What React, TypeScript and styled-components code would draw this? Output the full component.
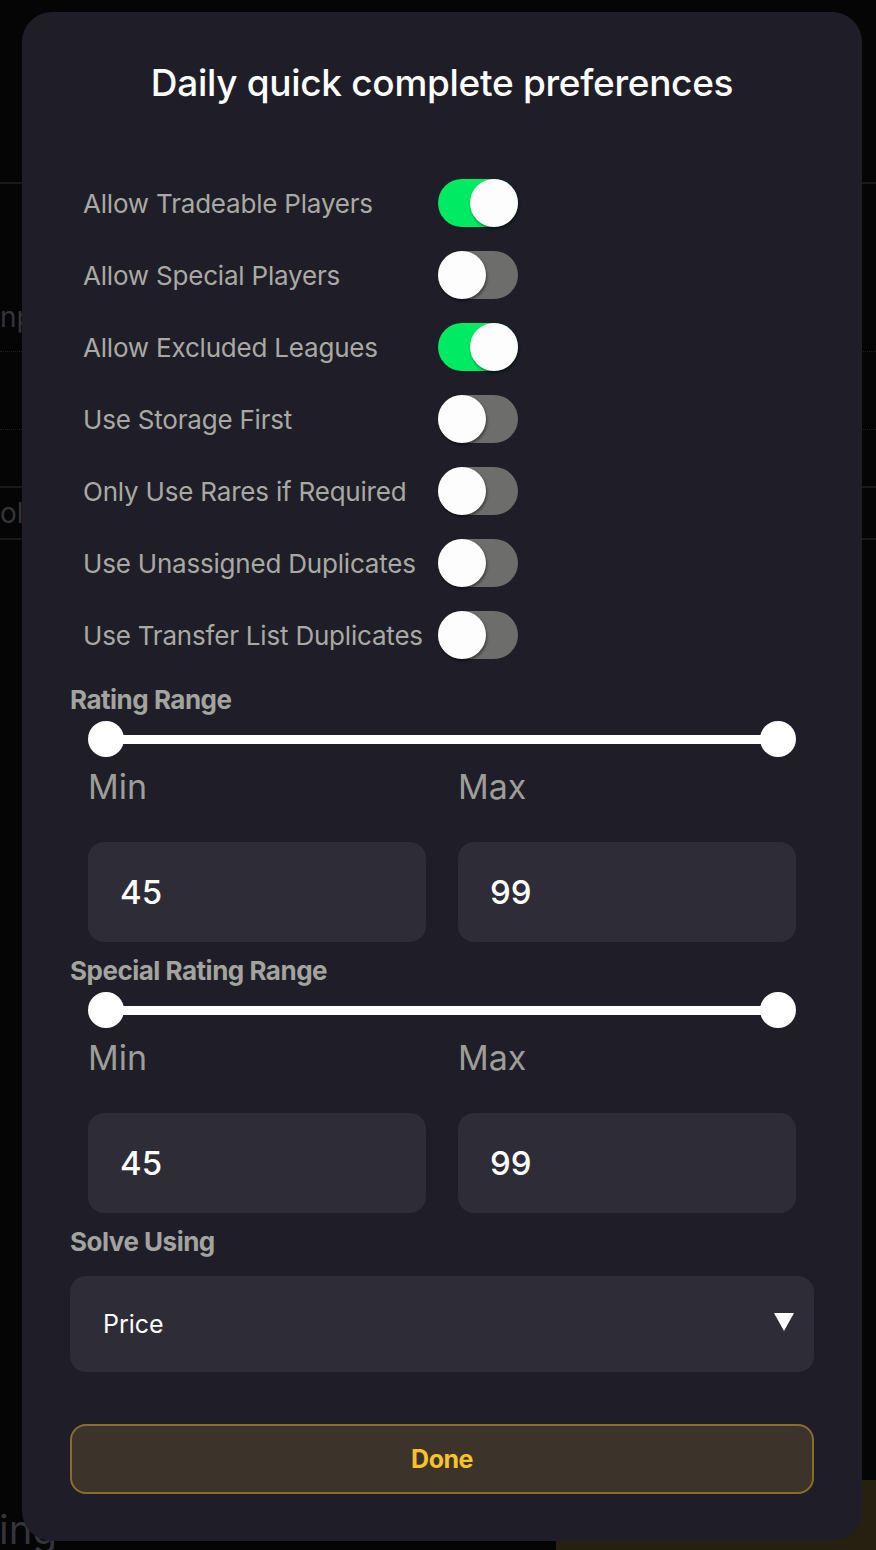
import React, { FC, useState } from 'react';
import styled, { createGlobalStyle } from 'styled-components';

const GlobalStyle = createGlobalStyle`
  html, body {
    margin: 0;
    padding: 0;
    background: #050505;
  }
  body {
    font-family: Inter, "Noto Sans", sans-serif;
    -webkit-font-smoothing: antialiased;
  }
`;

const Page = styled.div`
  position: relative;
  width: 876px;
  height: 1550px;
  overflow: hidden;
  background: #050505;
`;

/* faint page behind the dialog */
const Behind = styled.div`
  display: flex;
  flex-direction: column;
  height: 100%;
  opacity: 0.9;
`;
const BehindRow = styled.div<{ h: number; line?: string }>`
  height: ${(p) => p.h}px;
  box-sizing: border-box;
  border-bottom: ${(p) => p.line || 'none'};
  display: flex;
  align-items: center;
  color: #3a3a40;
  font-size: 28px;
  overflow: hidden;
  white-space: nowrap;
`;
const BehindFill = styled.div`
  flex: 1;
`;
const BehindBottom = styled.div`
  height: 70px;
  display: flex;
  align-items: flex-end;
  justify-content: space-between;
`;
const BehindWord = styled.span`
  color: #3a3a42;
  font-size: 40px;
  margin-left: -14px;
  line-height: 1;
`;
const BehindGold = styled.div`
  width: 320px;
  height: 70px;
  background: #2a2412;
  border-top-left-radius: 6px;
`;

const Modal = styled.div`
  position: absolute;
  top: 12px;
  left: 22px;
  width: 840px;
  height: 1529px;
  box-sizing: border-box;
  background: #1f1e28;
  border-radius: 30px;
  padding: 0 48px;
  display: flex;
  flex-direction: column;
`;

const Title = styled.h2`
  margin: 49px 0 0;
  text-align: center;
  color: #ffffff;
  font-size: 37px;
  font-weight: 500;
  line-height: 44px;
  letter-spacing: -0.3px;
`;

const Toggles = styled.div`
  margin-top: 74px;
  padding-left: 13px;
  display: flex;
  flex-direction: column;
  gap: 24px;
`;

const ToggleRow = styled.label`
  display: flex;
  align-items: center;
  height: 48px;
  cursor: pointer;
`;

const ToggleLabel = styled.span`
  width: 355px;
  color: #a9a9a4;
  font-size: 26px;
  font-weight: 400;
  letter-spacing: -0.2px;
  white-space: nowrap;
`;

const Track = styled.span<{ on: boolean }>`
  position: relative;
  display: inline-block;
  width: 80px;
  height: 48px;
  border-radius: 24px;
  background: ${(p) => (p.on ? '#00ea64' : '#6d6d6b')};
`;

const Knob = styled.span<{ on: boolean }>`
  position: absolute;
  top: 0;
  left: ${(p) => (p.on ? '32px' : '0')};
  width: 48px;
  height: 48px;
  border-radius: 50%;
  background: #fdfdfd;
  box-shadow: 1px 2px 3px rgba(0, 0, 0, 0.45);
`;

const SectionLabel = styled.div<{ top: number }>`
  margin-top: ${(p) => p.top}px;
  color: #a3a39f;
  font-size: 26px;
  font-weight: 700;
  letter-spacing: -0.5px;
  line-height: 30px;
`;

const RangeBlock = styled.div`
  padding-left: 18px;
  display: flex;
  flex-direction: column;
`;

const SliderTrack = styled.div`
  position: relative;
  margin-top: 6px;
  width: 708px;
  height: 36px;
  display: flex;
  align-items: center;
`;
const SliderBar = styled.div`
  margin: 0 18px;
  flex: 1;
  height: 9px;
  background: #ffffff;
`;
const Thumb = styled.span<{ side: 'left' | 'right' }>`
  position: absolute;
  top: 0;
  ${(p) => p.side}: 0;
  width: 36px;
  height: 36px;
  border-radius: 50%;
  background: #ffffff;
`;

const Fields = styled.div`
  display: grid;
  grid-template-columns: 338px 338px;
  column-gap: 32px;
`;
const FieldLabel = styled.div`
  margin-top: 10px;
  color: #9d9d99;
  font-size: 34px;
  font-weight: 400;
  line-height: 40px;
`;
const Input = styled.div`
  margin-top: 35px;
  height: 100px;
  box-sizing: border-box;
  background: #2d2c37;
  border-radius: 16px;
  padding-left: 32px;
  display: flex;
  align-items: center;
  color: #ffffff;
  font-size: 33px;
  font-weight: 500;
`;

const Select = styled.div`
  margin-top: 19px;
  height: 96px;
  box-sizing: border-box;
  background: #2d2c37;
  border-radius: 16px;
  padding: 0 20px 0 33px;
  display: flex;
  align-items: center;
  justify-content: space-between;
  color: #ffffff;
  font-size: 25px;
  font-weight: 400;
`;
const Caret = styled.span`
  width: 0;
  height: 0;
  margin-top: -4px;
  border-left: 10px solid transparent;
  border-right: 10px solid transparent;
  border-top: 18px solid #ffffff;
`;

const DoneButton = styled.button`
  margin-top: 52px;
  height: 70px;
  width: 100%;
  background: #3c342b;
  border: 2px solid #8b6c2f;
  border-radius: 16px;
  color: #f8c22a;
  font-family: Inter, "Noto Sans", sans-serif;
  font-size: 25px;
  font-weight: 700;
  letter-spacing: -0.5px;
  cursor: pointer;
`;

interface ToggleProps {
  label: string;
  initial: boolean;
}

const Toggle: FC<ToggleProps> = ({ label, initial }) => {
  const [on, setOn] = useState(initial);
  return (
    <ToggleRow onClick={() => setOn(!on)}>
      <ToggleLabel>{label}</ToggleLabel>
      <Track on={on}>
        <Knob on={on} />
      </Track>
    </ToggleRow>
  );
};

const Range: FC<{ min: number; max: number }> = ({ min, max }) => (
  <RangeBlock>
    <SliderTrack>
      <Thumb side="left" />
      <SliderBar />
      <Thumb side="right" />
    </SliderTrack>
    <Fields>
      <div>
        <FieldLabel>Min</FieldLabel>
        <Input>{min}</Input>
      </div>
      <div>
        <FieldLabel>Max</FieldLabel>
        <Input>{max}</Input>
      </div>
    </Fields>
  </RangeBlock>
);

const toggles = [
  { label: 'Allow Tradeable Players', on: true },
  { label: 'Allow Special Players', on: false },
  { label: 'Allow Excluded Leagues', on: true },
  { label: 'Use Storage First', on: false },
  { label: 'Only Use Rares if Required', on: false },
  { label: 'Use Unassigned Duplicates', on: false },
  { label: 'Use Transfer List Duplicates', on: false },
];

const App: FC = () => (
  <Page>
    <GlobalStyle />
    <Behind>
      <BehindRow h={184} line="2px solid #1c1c1c" />
      <BehindRow h={98} />
      <BehindRow h={70} line="1px dotted #222">np</BehindRow>
      <BehindRow h={78} line="1px dotted #222" />
      <BehindRow h={58} line="2px solid #1c1c1c" />
      <BehindRow h={52} line="2px solid #1c1c1c">olc</BehindRow>
      <BehindFill />
      <BehindBottom>
        <BehindWord>ting</BehindWord>
        <BehindGold />
      </BehindBottom>
    </Behind>
    <Modal>
      <Title>Daily quick complete preferences</Title>
      <Toggles>
        {toggles.map((t) => (
          <Toggle key={t.label} label={t.label} initial={t.on} />
        ))}
      </Toggles>
      <SectionLabel top={26}>Rating Range</SectionLabel>
      <Range min={45} max={99} />
      <SectionLabel top={14}>Special Rating Range</SectionLabel>
      <Range min={45} max={99} />
      <SectionLabel top={14}>Solve Using</SectionLabel>
      <Select>
        Price
        <Caret />
      </Select>
      <DoneButton>Done</DoneButton>
    </Modal>
  </Page>
);

export default App;
